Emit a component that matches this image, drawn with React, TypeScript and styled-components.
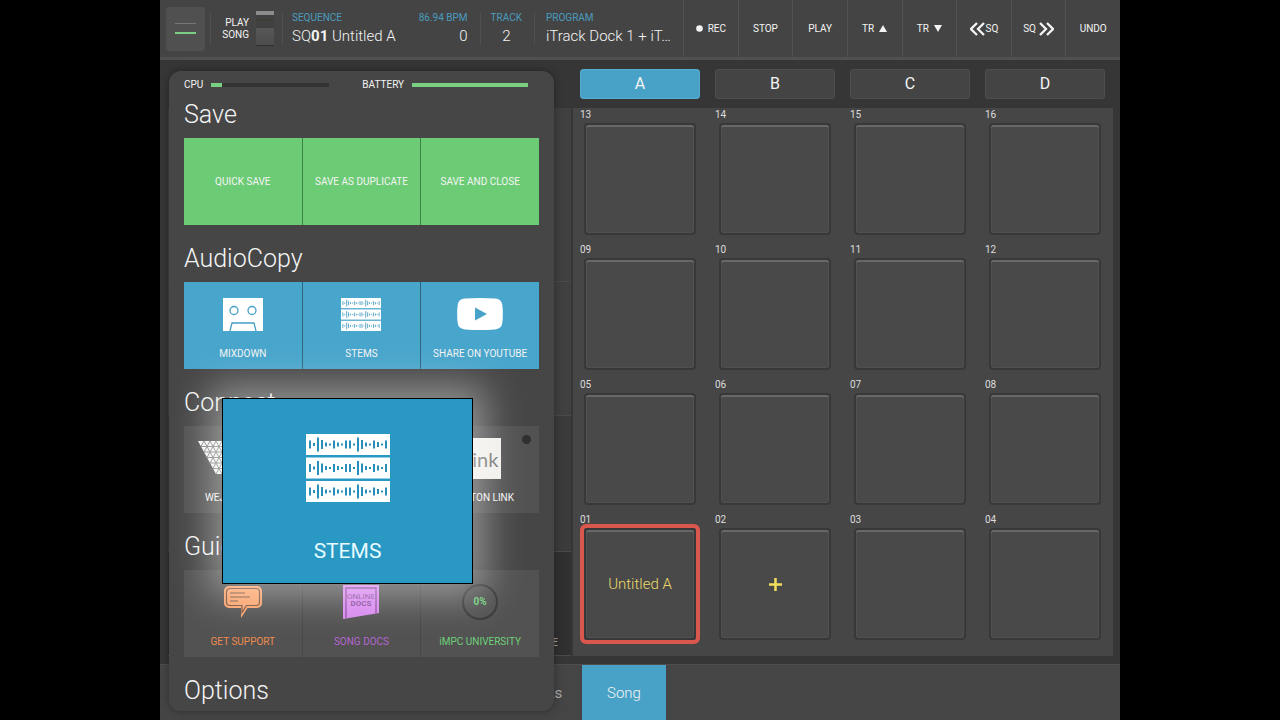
import React from "react";
import styled, { createGlobalStyle } from "styled-components";

const Global = createGlobalStyle`
  *, *::before, *::after { box-sizing: border-box; }
  body { margin: 0; background: #000; color: #f4f4f4; font-family: Roboto, "Liberation Sans", sans-serif; font-size: 10px; line-height: 12px; }
  button { font: inherit; color: inherit; border: 0; padding: 0; margin: 0; background: none; cursor: pointer; }
  h2 { margin: 0; font-weight: 300; }
`;

const Stage = styled.div`
  position: relative;
  display: flex;
  flex-direction: column;
  width: 75%;
  min-height: 100vh;
  margin: 0 auto;
  overflow: hidden;
  background: #363636;
`;

const TopBar = styled.header`
  display: grid;
  grid-template-columns: minmax(0, 523fr) minmax(0, 437fr);
  height: 60px;
  background: #444;
  border-bottom: 3px solid #505050;
`;

const Info = styled.div`
  display: flex;
  align-items: center;
  padding: 0 6px;
`;

const MenuButton = styled.button`
  display: flex;
  flex-direction: column;
  align-items: center;
  justify-content: center;
  gap: 8px;
  width: 39px;
  height: 44px;
  border-radius: 3px;
  background: #505050;
`;

const MenuLine = styled.span<{ $color: string; $thick: number }>`
  width: 21px;
  height: ${(p) => p.$thick}px;
  background: ${(p) => p.$color};
`;

const Rule = styled.span<{ $before: number; $after: number }>`
  width: 1px;
  height: 32px;
  margin: 0 ${(p) => p.$after}px 0 ${(p) => p.$before}px;
  background: #505050;
`;

const ModeLabel = styled.span`
  width: 32px;
  text-align: right;
`;

const ModeSwitch = styled.button`
  width: 18px;
  height: 35px;
  margin-left: 7px;
  background: linear-gradient(#8c8c8c 0 4px, #404040 4px 9px, #36402f 9px 10px, #404040 10px 17px, #585858 17px, #4c4c4c);
  border-bottom: 1px solid #2f2f2f;
`;

const Field = styled.div<{ $flex?: string; $align?: string }>`
  display: flex;
  flex-direction: column;
  flex: ${(p) => p.$flex || "0 0 auto"};
  min-width: 0;
  text-align: ${(p) => p.$align || "left"};
`;

const FieldName = styled.span`
  color: #4a9cbf;
`;

const FieldValue = styled.span`
  margin-top: 2px;
  font-size: 15px;
  line-height: 20px;
  font-weight: 300;
  white-space: nowrap;
  overflow: hidden;
  b { font-weight: 700; }
`;

const Transport = styled.nav`
  display: grid;
  grid-template-columns: repeat(8, 1fr);
`;

const TransportButton = styled.button<{ $gap?: number }>`
  display: flex;
  align-items: center;
  justify-content: center;
  gap: ${(p) => p.$gap ?? 5}px;
  border-left: 1px solid #525252;
  svg { display: block; }
`;

const Body = styled.main`
  display: grid;
  grid-template-columns: minmax(0, 412fr) minmax(0, 548fr);
  flex: 1;
`;

const Backdrop = styled.section`
  display: flex;
  flex-direction: column;
  padding: 48px 1px 8px 8px;
`;

const BackdropPane = styled.div<{ $h: number; $tone: string }>`
  display: flex;
  align-items: flex-end;
  justify-content: flex-end;
  height: ${(p) => p.$h}px;
  padding: 0 13px 6px;
  background: ${(p) => p.$tone};
  border-bottom: 1px solid #4a4a4a;
  color: #aaa;
`;

const PadSide = styled.section`
  padding: 9px 7px 8px 1px;
`;

const Banks = styled.div`
  display: grid;
  grid-template-columns: repeat(4, 1fr);
  gap: 15px;
  padding: 0 8px 9px 7px;
`;

const BankButton = styled.button<{ $on?: boolean }>`
  height: 30px;
  border: 1px solid ${(p) => (p.$on ? "#57abce" : "#4e4e4e")};
  border-radius: 3px;
  background: ${(p) => (p.$on ? "#48a2c7" : "#444")};
  font-size: 16px;
`;

const PadGrid = styled.div`
  display: grid;
  grid-template-columns: repeat(4, 1fr);
  gap: 4px 15px;
  padding: 0 8px 12px 7px;
  background: #464646;
`;

const PadCell = styled.div`
  display: flex;
  flex-direction: column;
`;

const PadNumber = styled.span`
  height: 11px;
  line-height: 13px;
  color: #ddd;
`;

const Pad = styled.button<{ $selected?: boolean }>`
  height: 120px;
  border: 4px solid ${(p) => (p.$selected ? "#d9574b" : "transparent")};
  border-radius: 6px;
`;

const PadFace = styled.span`
  display: flex;
  align-items: center;
  justify-content: center;
  height: 100%;
  border: 2px solid #383838;
  border-radius: 4px;
  background: #494949;
  box-shadow: inset 0 2px 0 #686868, inset 0 0 0 1px #505050;
  color: #ecd969;
  font-size: 15px;
  font-weight: 300;
`;

const BottomBar = styled.footer`
  display: grid;
  grid-template-columns: minmax(0, 422fr) minmax(0, 84fr) minmax(0, 454fr);
  height: 56px;
  background: #454545;
  border-top: 1px solid #4e4e4e;
`;

const EarlierTabs = styled.div`
  display: flex;
  justify-content: flex-end;
`;

const BottomTab = styled.button<{ $on?: boolean }>`
  min-width: 84px;
  background: ${(p) => (p.$on ? "#48a2c7" : "none")};
  color: ${(p) => (p.$on ? "#f4f4f4" : "#aaa")};
  font-size: 15px;
  font-weight: ${(p) => (p.$on ? 300 : 400)};
`;

const Menu = styled.aside`
  position: absolute;
  left: 9px;
  top: 71px;
  width: 385px;
  height: 640px;
  padding: 8px 15px 0;
  border-radius: 12px;
  background: #464646;
  box-shadow: 0 0 8px rgba(0, 0, 0, 0.35);
`;

const Meters = styled.div`
  display: flex;
  align-items: center;
  height: 12px;
`;

const Meter = styled.span<{ $width: number }>`
  width: ${(p) => p.$width}px;
  height: 4px;
  margin-left: 8px;
  background: #343434;
`;

const MeterFill = styled.span<{ $part: number }>`
  display: block;
  width: ${(p) => p.$part}%;
  height: 100%;
  background: #79cf82;
`;

const BatteryName = styled.span`
  margin-left: 33px;
`;

const Group = styled.section`
  height: 144px;
`;

const GroupTitle = styled.h2`
  height: 47px;
  padding-top: 9px;
  font-size: 25px;
  line-height: 30px;
`;

const Tiles = styled.div<{ $seam: string }>`
  display: grid;
  grid-template-columns: repeat(3, 1fr);
  gap: 1px;
  height: 87px;
  background: ${(p) => p.$seam};
`;

const Tile = styled.button<{ $tone: string; $ink?: string }>`
  position: relative;
  display: flex;
  flex-direction: column;
  align-items: center;
  justify-content: flex-end;
  padding-bottom: 9px;
  background: ${(p) => p.$tone};
  color: ${(p) => p.$ink || "#f4f4f4"};
`;

const PlainTile = styled(Tile)`
  justify-content: center;
  padding: 0;
`;

const TileArt = styled.span`
  display: flex;
  align-items: center;
  justify-content: center;
  height: 48px;
  margin-bottom: 10px;
`;

const StatusDot = styled.span`
  position: absolute;
  top: 9px;
  right: 8px;
  width: 9px;
  height: 9px;
  border-radius: 50%;
  background: #303030;
`;

const LinkBadge = styled.span`
  width: 41px;
  height: 41px;
  background: #f1f0ec;
  color: #777;
  font: 20px/42px Lato, sans-serif;
  text-align: center;
`;

const ProgressRing = styled.span`
  width: 36px;
  height: 36px;
  border: 2px solid #383838;
  border-radius: 50%;
  line-height: 32px;
  font-weight: 700;
  text-align: center;
`;

const Callout = styled.button`
  position: absolute;
  left: 53px;
  top: 327px;
  display: flex;
  flex-direction: column;
  align-items: center;
  gap: 37px;
  width: 251px;
  height: 186px;
  padding-top: 35px;
  border: 1px solid #000;
  background: #2999c3;
  box-shadow: 0 0 36px 12px rgba(255, 255, 255, 0.42);
  color: #e6fbff;
  font-size: 21px;
  line-height: 24px;
  svg { display: block; }
`;

const CassetteArt = () => (
  <svg width="40" height="33" viewBox="0 0 40 33">
    <path fill="#fff" d="M0 0h40v33H0z" />
    <g fill="none" stroke="#459fc4" strokeWidth="1.3">
      <circle cx="11" cy="12.5" r="4" />
      <circle cx="29" cy="12.5" r="4" />
      <path d="M7 33l2-8h22l2 8" />
    </g>
  </svg>
);

const BARS = [8, 3, 14, 9, 4, 2, 8, 4, 2, 8, 8, 2, 14, 9, 4, 2, 8, 5, 2, 8];

const StemsArt = ({ width, height, ink }: { width: number; height: number; ink: string }) => (
  <svg width={width} height={height} viewBox="0 0 84 68" preserveAspectRatio="none">
    {[0, 23.5, 47].map((y) => (
      <g key={y}>
        <rect y={y} width="84" height="21" fill="#fff" />
        {BARS.map((h, i) => (
          <rect key={i} x={3 + i * 4} y={y + 10.5 - h / 2} width="2" height={h} fill={ink} />
        ))}
      </g>
    ))}
  </svg>
);

const VideoArt = () => (
  <svg width="46" height="32" viewBox="0 0 46 32">
    <path fill="#fff" d="M8 .6Q23-.5 38 .6Q44.5 1 45.3 7Q46.4 16 45.3 25Q44.5 31 38 31.4Q23 32.5 8 31.4Q1.500 31 .7 25Q-.4 16 .7 7Q1.5 1 8 .6z" />
    <path fill="#48a2c7" d="M18 9.500v13l12-6.500z" />
  </svg>
);

const MeshArt = () => (
  <svg width="90" height="34" viewBox="0 0 90 34">
    <clipPath id="mesh">
      <path d="M0 0h90L72 33H54L45 17 36 33H18z" />
    </clipPath>
    <g clipPath="url(#mesh)">
      <path fill="#f4f4f4" d="M0 0h90v34H0z" />
      <path
        fill="none"
        stroke="#858585"
        d="M0 5.500h90M0 11h90M0 16.500h90M0 22h90M0 27.500h90M6 0l18 33M12 0l18 33M18 0l18 33M24 0l18 33M30 0l18 33M6 0l-18 33M12 0l-18 33M18 0L0 33M24 0L6 33M30 0L12 33M36 0L18 33M42 0L24 33M48 0L30 33"
      />
    </g>
  </svg>
);

const SupportArt = () => (
  <svg width="40" height="34" viewBox="0 0 40 34">
    <path fill="#fba46c" d="M6 1h28a5 5 0 0 1 5 5v12a5 5 0 0 1-5 5H24.5L18 33v-10H6a5 5 0 0 1-5-5V6a5 5 0 0 1 5-5z" />
    <path
      fill="none"
      stroke="#75523f"
      strokeWidth="1.2"
      d="M7 3.5h26a3.500 3.500 0 0 1 3.500 3.500v10a3.500 3.500 0 0 1-3.500 3.500h-9.500L19 27.500v-7H7A3.500 3.500 0 0 1 3.500 17V7A3.500 3.500 0 0 1 7 3.500zM7 8h15M7 12h20M7 16h8"
    />
  </svg>
);

const DocsArt = () => (
  <svg width="36" height="34" viewBox="0 0 36 34">
    <path fill="#d98bf0" d="M0 0h36v28L0 34z" />
    <path fill="none" stroke="#8a4d9b" strokeWidth="1.3" d="M3 33V3h30v25.500" />
    <g fill="#8a4d9b" fontFamily="Roboto" fontSize="8" textAnchor="middle">
      <text x="18" y="14">ONLINE</text>
      <text x="18" y="21" fontWeight="700">DOCS</text>
    </g>
  </svg>
);

const Chevrons = ({ flip }: { flip?: boolean }) => (
  <svg width="15" height="14" viewBox="0 0 15 14">
    <path
      fill="none"
      stroke="#f4f4f4"
      strokeWidth="2.3"
      d={flip ? "M1 1l6 6-6 6M8 1l6 6-6 6" : "M7 1L1 7l6 6M14 1L8 7l6 6"}
    />
  </svg>
);

const Triangle = ({ down }: { down?: boolean }) => (
  <svg width="8" height="7" viewBox="0 0 8 7">
    <path fill="#f4f4f4" d={down ? "M0 0h8L4 7z" : "M0 7h8L4 0z"} />
  </svg>
);

const Dot = () => (
  <svg width="7" height="7" viewBox="0 0 7 7">
    <circle cx="3.5" cy="3.5" r="3.3" fill="#f4f4f4" />
  </svg>
);

const Plus = () => (
  <svg width="13" height="13" viewBox="0 0 13 13">
    <path stroke="#f2e05c" strokeWidth="2.500" d="M6.500 0v13M0 6.500h13" />
  </svg>
);

const PADS = ["13", "14", "15", "16", "09", "10", "11", "12", "05", "06", "07", "08", "01", "02", "03", "04"];

const padContent: Record<string, React.ReactNode> = { "01": "Untitled A", "02": <Plus /> };

const BLUE = "#48a5cb";
const GREEN = "#6ccb75";
const GREY = "#525252";

export default function App() {
  return (
    <>
      <Global />
      <Stage>
        <TopBar>
          <Info>
            <MenuButton aria-label="Menu">
              <MenuLine $color="#777" $thick={1} />
              <MenuLine $color="#79cf82" $thick={2} />
            </MenuButton>
            <Rule $before={5} $after={6} />
            <ModeLabel>PLAY SONG</ModeLabel>
            <ModeSwitch aria-label="Play song mode" />
            <Rule $before={8} $after={9} />
            <Field $flex="1 1 0">
              <FieldName>SEQUENCE</FieldName>
              <FieldValue>SQ<b>01</b> Untitled A</FieldValue>
            </Field>
            <Field $align="right">
              <FieldName>86.94 BPM</FieldName>
              <FieldValue>0</FieldValue>
            </Field>
            <Rule $before={12} $after={10} />
            <Field $align="center">
              <FieldName>TRACK</FieldName>
              <FieldValue>2</FieldValue>
            </Field>
            <Rule $before={12} $after={11} />
            <Field $flex="0 0 131px">
              <FieldName>PROGRAM</FieldName>
              <FieldValue>iTrack Dock 1 + iT…</FieldValue>
            </Field>
          </Info>
          <Transport>
            <TransportButton><Dot />REC</TransportButton>
            <TransportButton>STOP</TransportButton>
            <TransportButton>PLAY</TransportButton>
            <TransportButton>TR<Triangle /></TransportButton>
            <TransportButton>TR<Triangle down /></TransportButton>
            <TransportButton $gap={1}><Chevrons />SQ</TransportButton>
            <TransportButton $gap={3}>SQ<Chevrons flip /></TransportButton>
            <TransportButton>UNDO</TransportButton>
          </Transport>
        </TopBar>

        <Body>
          <Backdrop>
            <BackdropPane $h={174} $tone="#404040" />
            <BackdropPane $h={134} $tone="#404040" />
            <BackdropPane $h={136} $tone="#3b3b3b" />
            <BackdropPane $h={104} $tone="#303030">ERASE</BackdropPane>
          </Backdrop>
          <PadSide>
            <Banks>
              <BankButton $on>A</BankButton>
              <BankButton>B</BankButton>
              <BankButton>C</BankButton>
              <BankButton>D</BankButton>
            </Banks>
            <PadGrid>
              {PADS.map((n) => (
                <PadCell key={n}>
                  <PadNumber>{n}</PadNumber>
                  <Pad $selected={n === "01"} aria-label={`Pad ${n}`}>
                    <PadFace>{padContent[n]}</PadFace>
                  </Pad>
                </PadCell>
              ))}
            </PadGrid>
          </PadSide>
        </Body>

        <BottomBar>
          <EarlierTabs>
            <BottomTab>Tracks</BottomTab>
          </EarlierTabs>
          <BottomTab $on>Song</BottomTab>
        </BottomBar>

        <Menu>
          <Meters>
            <span>CPU</span>
            <Meter $width={118}><MeterFill $part={9} /></Meter>
            <BatteryName>BATTERY</BatteryName>
            <Meter $width={116}><MeterFill $part={100} /></Meter>
          </Meters>
          <Group>
            <GroupTitle>Save</GroupTitle>
            <Tiles $seam="#3f8247">
              <PlainTile $tone={GREEN}>QUICK SAVE</PlainTile>
              <PlainTile $tone={GREEN}>SAVE AS DUPLICATE</PlainTile>
              <PlainTile $tone={GREEN}>SAVE AND CLOSE</PlainTile>
            </Tiles>
          </Group>
          <Group>
            <GroupTitle>AudioCopy</GroupTitle>
            <Tiles $seam="#2f647a">
              <Tile $tone={BLUE}><TileArt><CassetteArt /></TileArt>MIXDOWN</Tile>
              <Tile $tone={BLUE}><TileArt><StemsArt width={40} height={33} ink="#58a5c5" /></TileArt>STEMS</Tile>
              <Tile $tone={BLUE}><TileArt><VideoArt /></TileArt>SHARE ON YOUTUBE</Tile>
            </Tiles>
          </Group>
          <Group>
            <GroupTitle>Connect</GroupTitle>
            <Tiles $seam="#484848">
              <Tile $tone={GREY}><TileArt><MeshArt /></TileArt>WEJAAM SHARE</Tile>
              <Tile $tone={GREY}>WIST</Tile>
              <Tile $tone={GREY}><StatusDot /><TileArt><LinkBadge>Link</LinkBadge></TileArt>ABLETON LINK</Tile>
            </Tiles>
          </Group>
          <Group>
            <GroupTitle>Guides</GroupTitle>
            <Tiles $seam="#484848">
              <Tile $tone={GREY} $ink="#f08c4f"><TileArt><SupportArt /></TileArt>GET SUPPORT</Tile>
              <Tile $tone={GREY} $ink="#b565d0"><TileArt><DocsArt /></TileArt>SONG DOCS</Tile>
              <Tile $tone={GREY} $ink="#6fd07a"><TileArt><ProgressRing>0%</ProgressRing></TileArt>iMPC UNIVERSITY</Tile>
            </Tiles>
          </Group>
          <GroupTitle>Options</GroupTitle>
          <Callout>
            <StemsArt width={84} height={68} ink="#2a8fb8" />
            STEMS
          </Callout>
        </Menu>
      </Stage>
    </>
  );
}
